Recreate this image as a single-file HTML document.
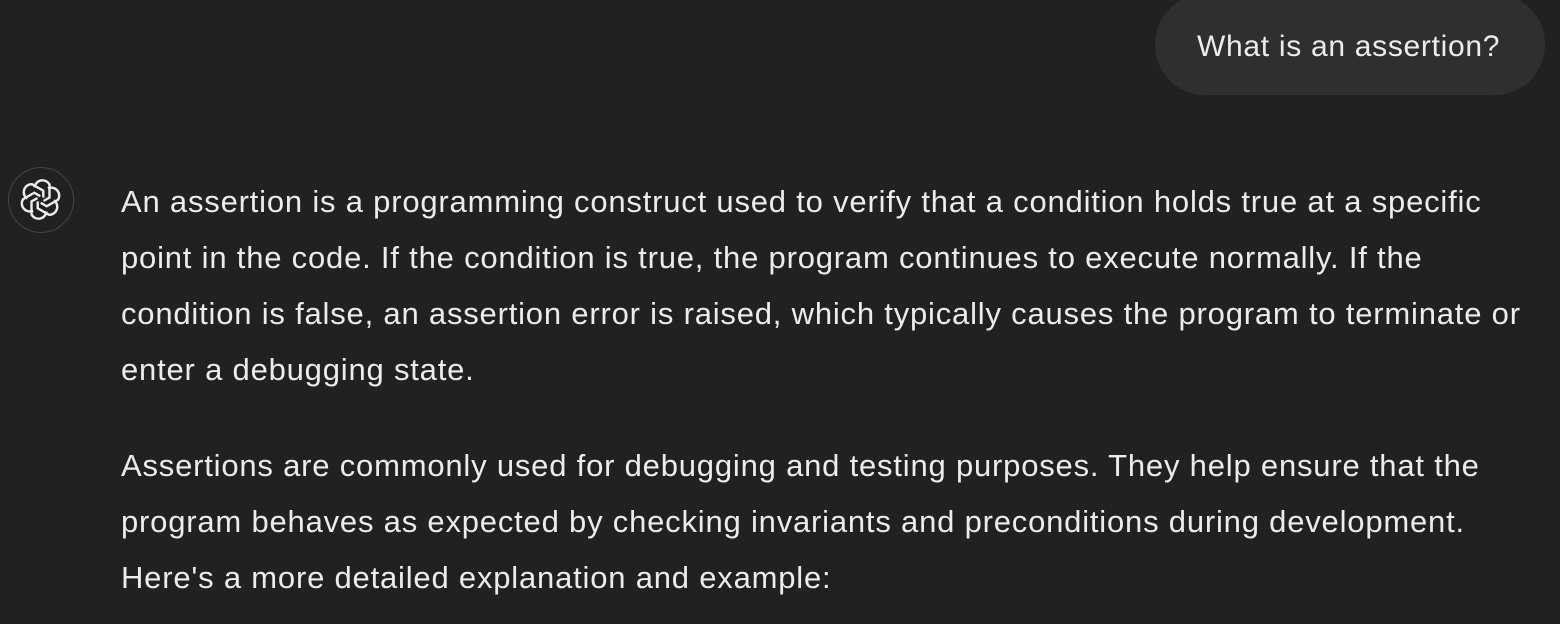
<!DOCTYPE html>
<html><head><meta charset="utf-8"><style>
html,body{margin:0;padding:0;background:#212121;width:1560px;height:624px;overflow:hidden;font-family:"Liberation Sans",sans-serif;color:#ececec}
.bubble{position:absolute;left:1155px;top:-6px;width:390px;height:101px;border-radius:50px;background:#2f2f2f;}
.bubble span{position:absolute;left:42px;top:33px;font-size:30px;letter-spacing:0.7px;line-height:40px;white-space:nowrap}
.icon{position:absolute;left:8px;top:167px;width:66px;height:66px;border:1.5px solid #444;border-radius:50%;box-sizing:border-box}
.p{position:absolute;left:121px;font-size:31px;letter-spacing:0.8px;line-height:56px;white-space:nowrap}
</style></head><body>
<div class="bubble"><span>What is an assertion?</span></div>
<div class="icon"><svg width="63" height="63" viewBox="-31.5 -31.5 63 63"><g fill="none" stroke="#ececec" stroke-width="2.4">
<g id="e"><path d="M-6 -12 a8 8 0 0 1 15 -3 l0 13 l-6 3.5"/></g>
<use href="#e" transform="rotate(60)"/><use href="#e" transform="rotate(120)"/><use href="#e" transform="rotate(180)"/><use href="#e" transform="rotate(240)"/><use href="#e" transform="rotate(300)"/>
</g></svg></div>
<div class="p" style="top:174px">An assertion is a programming construct used to verify that a condition holds true at a specific<br>point in the code. If the condition is true, the program continues to execute normally. If the<br>condition is false, an assertion error is raised, which typically causes the program to terminate or<br>enter a debugging state.</div>
<div class="p" style="top:438px">Assertions are commonly used for debugging and testing purposes. They help ensure that the<br>program behaves as expected by checking invariants and preconditions during development.<br>Here's a more detailed explanation and example:</div>
</body></html>
